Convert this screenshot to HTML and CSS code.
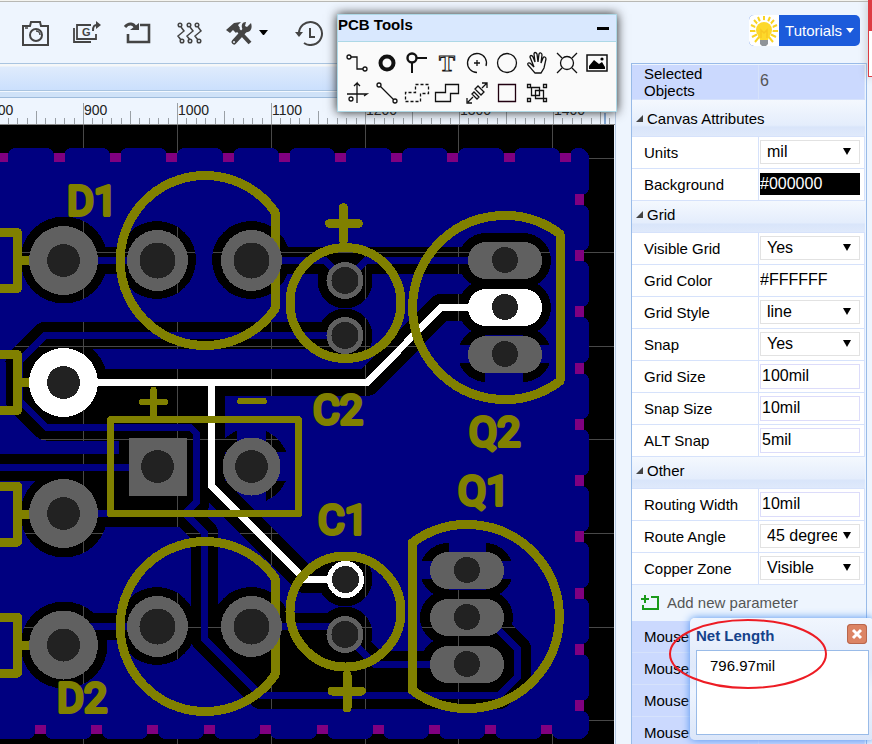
FILE: index.html
```html
<!DOCTYPE html>
<html lang="en">
<head>
<meta charset="utf-8">
<title>PCB Editor</title>
<link rel="stylesheet" href="styles.css">
</head>
<body>
<header class="topbar">
  <nav class="toolbar" aria-label="Main toolbar">
    <button class="tool" aria-label="Snapshot"><svg width="30" height="26" viewBox="0 0 30 26"><path d="M2 6h7l1-4h9l1 4h7v19H2z" fill="none" stroke="#444" stroke-width="2"/><circle cx="15" cy="15" r="6" fill="none" stroke="#444" stroke-width="2"/><path d="M15 11a4 4 0 0 1 4 4M4 8h3" fill="none" stroke="#444" stroke-width="1.5"/></svg></button>
    <button class="tool" aria-label="Generate Gerber"><svg width="30" height="26" viewBox="0 0 30 26"><path d="M19 5H5v14h19v-5M2 8v14h17" fill="none" stroke="#444" stroke-width="1.8"/><path d="M21 11c0-5 1-6 5-6" fill="none" stroke="#444" stroke-width="2"/><path d="M24 1l5 4-5 4z" fill="#444"/><text x="10" y="16" class="gerber">G</text></svg></button>
    <button class="tool" aria-label="Import changes"><svg width="30" height="26" viewBox="0 0 30 26"><path d="M17 5h9v17H5V14" fill="none" stroke="#444" stroke-width="2.6"/><path d="M2 7c4-5 9-3 10 0" fill="none" stroke="#444" stroke-width="3"/><path d="M7 10h9V3z" fill="#444"/></svg></button>
    <button class="tool" aria-label="Autorouter"><svg width="30" height="26" viewBox="0 0 30 26" fill="none" stroke="#444" stroke-width="1.5"><circle cx="6" cy="5" r="1.800"/><circle cx="15" cy="5" r="1.800"/><circle cx="23" cy="5" r="1.800"/><circle cx="8" cy="21" r="1.800"/><circle cx="16" cy="21" r="1.800"/><circle cx="25" cy="21" r="1.800"/><path d="M7 7l3 4-6 5 3 4M16 7l3 4-6 5 3 4M24 7l3 4-6 5 3 4"/></svg></button>
    <button class="tool menu" aria-label="Tools"><svg width="30" height="26" viewBox="0 0 30 26"><path d="M1 10l8-7 7-1-3 3 2 3-4 5-3-3-3 3z" fill="#444"/><path d="M12 9l13 14" stroke="#444" stroke-width="4"/><path d="M9 22l11-12" stroke="#444" stroke-width="5" stroke-linecap="round"/><circle cx="9" cy="22" r="1" fill="#eef5fe"/><path d="M26 3l-4 4-2-1 1-4c-5 0-5 5-3 8l2 2c5 1 8-3 6-9z" fill="#444"/></svg><svg width="9" height="5" viewBox="0 0 9 5"><path d="M0 0h9L5 5H4z"/></svg></button>
    <button class="tool" aria-label="History"><svg width="30" height="26" viewBox="0 0 30 26"><path d="M5 14A11.500 11.500 0 1 1 10 23" fill="none" stroke="#444" stroke-width="2"/><path d="M1 12h8l-4 5z" fill="#444"/><path d="M16 8v9h5" fill="none" stroke="#444" stroke-width="2"/></svg></button>
  </nav>
  <button class="tutorials">
    <span class="bulb"><svg width="30" height="31" viewBox="0 0 30 31"><path d="M15 1v7M15 16L1 16M29 16H15M15 16L5 5M15 16L25 5M15 16L9 2M15 16L21 2M15 16L2 10M15 16L28 10M15 16L3 22M15 16L27 22M15 16L6 27M15 16L24 27" stroke="#f9d423" stroke-width="2"/><circle cx="15" cy="14" r="9" fill="#fff"/><circle cx="15" cy="15" r="8" fill="#fdd92b"/><path d="M9 19h12l-2 6h-8z" fill="#fdd92b"/><path d="M12 23v-8l3 3 3-3v8" fill="none" stroke="#f8c722" stroke-width="1.5"/><path d="M11 25h8v4l-2 2h-4l-2-2z" fill="#8f9499"/></svg></span>
    <span class="tutorials-label">Tutorials<svg width="8" height="5" viewBox="0 0 8 5"><path d="M0 0h8L4 5z" fill="#fff"/></svg></span>
  </button>
</header>

<div class="panes">
  <main class="editor">
    <div class="tabstrip"></div>
    <div class="tabline"></div>
    <div class="ruler">
      <svg width="100%" height="28">
        <defs>
          <pattern id="ticks" x="83" y="0" width="94" height="28" patternUnits="userSpaceOnUse">
            <path d="M0 5h1v23h-1zM47 13h1v15h-1z" fill="#9aa0a6"/>
            <path d="M9 20h1v8h-1zM19 20h1v8h-1zM28 20h1v8h-1zM38 20h1v8h-1zM56 20h1v8h-1zM66 20h1v8h-1zM75 20h1v8h-1zM85 20h1v8h-1z" fill="#9aa0a6"/>
          </pattern>
        </defs>
        <rect width="100%" height="28" fill="url(#ticks)"/>
        <text x="-10" y="17">800</text><text x="84" y="17">900</text><text x="178" y="17">1000</text><text x="272" y="17">1100</text><text x="366" y="17">1200</text><text x="460" y="17">1300</text><text x="554" y="17">1400</text>
        <path d="M605 15v13" stroke="#1d5fae"/>
      </svg>
    </div>
    <div class="canvas">
      <svg class="board" width="614" height="619" viewBox="0 125 614 619" shape-rendering="crispEdges">
        <defs>
          <path id="notch" d="M-12-1V0Q-6 1-5 7V14H5V7Q6 1 12 0V-1z"/>
          <rect id="via-edge" x="-5" y="5" width="11" height="9"/>
          <g id="pad-l"><circle r="34.5"/><circle r="16.5" fill="#222"/></g>
          <g id="pad-m"><circle r="30.5"/><circle r="18" fill="#222"/></g>
          <g id="pad-s"><circle r="18.5"/><circle r="13.5" fill="#222"/></g>
          <g id="pad-o"><rect x="-37" y="-18" width="74" height="37" rx="18"/><circle r="13" fill="#222"/></g>
          <rect id="gap-o" x="-47" y="-27" width="93" height="55" rx="28"/>
          <g id="traces">
            <path d="M64 260.5H157M251 260.5H325L345 281L366 260.5H505"/>
            <path d="M345 335.5H45L19 361.5V400L46 427H190L196 433V503L185 513.5H64M0 467H157"/>
            <path d="M185 513.5L204.5 533V639L261 695.5H499L517.5 677V649L486 617"/>
            <path d="M64 645L83 626.5H157M251 626.5H337L345 634.5L374 664H467"/>
          </g>
          <path id="net" d="M64 382.5H367L441 307.5H505M211 382V485.5L305 579.5H345"/>
          <mask id="clearance" maskUnits="userSpaceOnUse" x="0" y="125" width="614" height="619">
            <rect x="-20" y="148" width="609" height="591" rx="10" fill="#fff"/>
            <g fill="#000">
              <circle cx="251" cy="466" r="38"/><use href="#gap-o" x="505" y="354"/><use href="#gap-o" x="467" y="570"/>
            </g>
            <path d="M237 425h29v85h-29zM210 452h85v29h-85zM485 323h38v62h-38zM455 345h100v18H455zM449 540h37v60h-37zM417 561h100v18H417z" fill="#fff"/>
            <g fill="#000">
              <circle cx="64" cy="260" r="43.5"/><circle cx="64" cy="382" r="43.5"/><circle cx="64" cy="514" r="43.5"/><circle cx="64" cy="645" r="43.5"/>
              <circle cx="157" cy="260" r="39"/><circle cx="251" cy="260" r="39"/><circle cx="157" cy="626" r="39"/><circle cx="251" cy="626" r="39"/>
              <circle cx="345" cy="281" r="27.5"/><circle cx="345" cy="336" r="27.5"/><circle cx="345" cy="579" r="27.5"/><circle cx="345" cy="634" r="27.5"/>
              <use href="#gap-o" x="505" y="260"/><use href="#gap-o" x="505" y="307"/><use href="#gap-o" x="467" y="617"/><use href="#gap-o" x="467" y="664"/>
              <path d="M119 428h78v78h-78zM85 390h126v26H85zM90 468h100v40H90zM215 640h155l20 50H262zM370 674h140v14H370z"/>
              <path d="M480 660h34v20h-34zM325 250h40v20h-40z"/>
            </g>
            <g fill="none" stroke="#000" stroke-width="27" stroke-linejoin="round"><use href="#traces"/><use href="#net"/></g>
            <g>
              <use href="#notch" x="3" y="148"/><use href="#notch" x="59" y="148"/><use href="#notch" x="115" y="148"/><use href="#notch" x="172" y="148"/><use href="#notch" x="228" y="148"/><use href="#notch" x="284" y="148"/><use href="#notch" x="340" y="148"/><use href="#notch" x="397" y="148"/><use href="#notch" x="453" y="148"/><use href="#notch" x="509" y="148"/><use href="#notch" x="565" y="148"/>
            </g>
            <g transform="translate(589) rotate(90)">
              <use href="#notch" x="200"/><use href="#notch" x="256"/><use href="#notch" x="312"/><use href="#notch" x="368"/><use href="#notch" x="424"/><use href="#notch" x="481"/><use href="#notch" x="537"/><use href="#notch" x="593"/><use href="#notch" x="649"/><use href="#notch" x="706"/>
            </g>
            <g transform="translate(0 739) scale(1 -1)">
              <use href="#notch" x="40"/><use href="#notch" x="97"/><use href="#notch" x="153"/><use href="#notch" x="209"/><use href="#notch" x="265"/><use href="#notch" x="322"/><use href="#notch" x="378"/><use href="#notch" x="434"/><use href="#notch" x="490"/><use href="#notch" x="547"/>
            </g>
          </mask>
        </defs>
        <rect y="125" width="614" height="619" fill="#000"/>
        <path d="M83.500 125V744M177.500 125V744M271.500 125V744M365 125V744M458.500 125V744M552.500 125V744M0 158.500H614M0 252.500H614M0 346H614M0 439.500H614M0 533.500H614M0 627.500H614M0 720.500H614" stroke="#484848"/>
        <rect y="125" width="614" height="619" fill="#000080" mask="url(#clearance)"/>
        <g fill="#800080">
          <use href="#via-edge" x="2" y="148"/><use href="#via-edge" x="59" y="148"/><use href="#via-edge" x="115" y="148"/><use href="#via-edge" x="171" y="148"/><use href="#via-edge" x="228" y="148"/><use href="#via-edge" x="284" y="148"/><use href="#via-edge" x="340" y="148"/><use href="#via-edge" x="396" y="148"/><use href="#via-edge" x="452" y="148"/><use href="#via-edge" x="509" y="148"/><use href="#via-edge" x="565" y="148"/>
          <g transform="translate(589) rotate(90)">
            <use href="#via-edge" x="199"/><use href="#via-edge" x="255"/><use href="#via-edge" x="311"/><use href="#via-edge" x="368"/><use href="#via-edge" x="424"/><use href="#via-edge" x="480"/><use href="#via-edge" x="536"/><use href="#via-edge" x="593"/><use href="#via-edge" x="649"/><use href="#via-edge" x="705"/>
          </g>
          <g transform="translate(0 739) scale(1 -1)">
            <use href="#via-edge" x="40"/><use href="#via-edge" x="96"/><use href="#via-edge" x="152"/><use href="#via-edge" x="209"/><use href="#via-edge" x="265"/><use href="#via-edge" x="322"/><use href="#via-edge" x="378"/><use href="#via-edge" x="434"/><use href="#via-edge" x="490"/><use href="#via-edge" x="546"/>
          </g>
        </g>
        <g fill="none" stroke-width="7"><use href="#traces" stroke="#000080"/><use href="#net" stroke="#fff"/></g>
        <g fill="none" stroke="#808000" stroke-width="9" stroke-linejoin="round">
          <path d="M275 212A85 85 0 1 0 275 309z"/>
          <path d="M275 578A85 85 0 1 0 275 675z"/>
          <circle cx="345.500" cy="303" r="55.500"/><circle cx="345.500" cy="611.500" r="55.500"/>
          <path d="M560 234A92 92 0 1 0 560 381z"/>
          <path d="M412 543A92 92 0 1 1 412 690z"/>
          <path d="M-5 232.500H17.500V288.500H-5M22 260.500H32M-5 354.500H17.500V410.500H-5M22 382.500H32M-5 486H17.500V542H-5M22 514H32M-5 617H17.500V673H-5M22 645H32"/>
          <path d="M110.500 419.500H298.500V513.500H110.500z" stroke-width="7"/>
          <g stroke-linecap="round"><path d="M329.500 223.500H358.500M343.500 207.500V240M332 691H361.500M347 675V708"/><path d="M142 402H165M153.500 390V416M240.500 401H263.500" stroke-width="6.500"/></g>
        </g>
        <g class="refdes">
          <text x="67" y="215">D1</text><text x="313" y="424">C2</text><text x="469" y="446">Q2</text><text x="458" y="505">Q1</text><text x="318" y="534">C1</text><text x="57" y="712">D2</text>
        </g>
        <g fill="#606060">
          <use href="#pad-l" x="63.500" y="260.500"/><use href="#pad-l" x="63.500" y="382.500" fill="#fff"/><use href="#pad-l" x="63.500" y="513.500"/><use href="#pad-l" x="63.500" y="645"/>
          <use href="#pad-m" x="157.500" y="260.500"/><use href="#pad-m" x="251.500" y="260.500"/><use href="#pad-m" x="157.500" y="626.500"/><use href="#pad-m" x="251.500" y="626.500"/>
          <rect x="129" y="438" width="58" height="58"/><circle cx="157.500" cy="466.500" r="16.500" fill="#222"/>
          <circle cx="251.500" cy="466.500" r="29"/><circle cx="251.500" cy="466.500" r="16.500" fill="#222"/>
          <use href="#pad-s" x="345" y="280.500"/><use href="#pad-s" x="345" y="335.500"/><use href="#pad-s" x="345.500" y="579.500" fill="#fff"/><use href="#pad-s" x="345" y="634.500"/>
          <use href="#pad-o" x="505" y="260"/><use href="#pad-o" x="505" y="307" fill="#fff"/><use href="#pad-o" x="505" y="354"/>
          <use href="#pad-o" x="467" y="570"/><use href="#pad-o" x="467" y="617"/><use href="#pad-o" x="467" y="664"/>
        </g>
      </svg>
    </div>
  </main>

  <aside class="sidebar">
    <form class="props">
      <div class="row readonly selected"><span class="name">Selected Objects</span><output class="value">6</output></div>
      <h2 class="group first">Canvas Attributes</h2>
      <div class="row"><label class="name" for="units">Units</label><div class="value"><select id="units"><option>mil</option></select></div></div>
      <div class="row"><label class="name" for="bg">Background</label><div class="value"><input id="bg" class="swatch dark" value="#000000"></div></div>
      <h2 class="group">Grid</h2>
      <div class="row"><label class="name" for="vgrid">Visible Grid</label><div class="value"><select id="vgrid"><option>Yes</option></select></div></div>
      <div class="row"><label class="name" for="gcolor">Grid Color</label><div class="value"><input id="gcolor" class="swatch" value="#FFFFFF"></div></div>
      <div class="row"><label class="name" for="gstyle">Grid Style</label><div class="value"><select id="gstyle"><option>line</option></select></div></div>
      <div class="row"><label class="name" for="snap">Snap</label><div class="value"><select id="snap"><option>Yes</option></select></div></div>
      <div class="row"><label class="name" for="gsize">Grid Size</label><div class="value"><input id="gsize" value="100mil"></div></div>
      <div class="row"><label class="name" for="ssize">Snap Size</label><div class="value"><input id="ssize" value="10mil"></div></div>
      <div class="row"><label class="name" for="alt">ALT Snap</label><div class="value"><input id="alt" value="5mil"></div></div>
      <h2 class="group">Other</h2>
      <div class="row"><label class="name" for="rwidth">Routing Width</label><div class="value"><input id="rwidth" value="10mil"></div></div>
      <div class="row"><label class="name" for="angle">Route Angle</label><div class="value"><select id="angle"><option>45 degree</option></select></div></div>
      <div class="row"><label class="name" for="zone">Copper Zone</label><div class="value"><select id="zone"><option>Visible</option></select></div></div>
      <button type="button" class="add"><svg width="18" height="16" viewBox="0 0 18 16"><path d="M10 2h7v12H2v-4M0 4h8M4 0v8" fill="none" stroke="#1a9a1a" stroke-width="2"/></svg>Add new parameter</button>
      <div class="row readonly"><span class="name">Mouse</span><output class="value"></output></div>
      <div class="row readonly"><span class="name">Mouse</span><output class="value"></output></div>
      <div class="row readonly"><span class="name">Mouse</span><output class="value"></output></div>
      <div class="row readonly"><span class="name">Mouse</span><output class="value"></output></div>
    </form>
  </aside>
</div>

<section class="palette" aria-label="PCB Tools">
  <div class="palette-head"><h2>PCB Tools</h2><button class="minimize" aria-label="Minimize"></button></div>
  <div class="palette-body">
    <button aria-label="Track"><svg viewBox="0 0 30 30"><circle cx="7" cy="9" r="2"/><circle cx="23" cy="21" r="2"/><path d="M9 9h6v12h6"/></svg></button>
    <button aria-label="Pad"><svg viewBox="0 0 30 30"><circle cx="15" cy="15" r="6.500" stroke-width="4"/></svg></button>
    <button aria-label="Via"><svg viewBox="0 0 30 30"><circle cx="10" cy="10" r="4.500" stroke-width="2.400"/><path d="M15 10h10M10 15v10" stroke-width="2"/></svg></button>
    <button aria-label="Text"><svg viewBox="0 0 30 30"><text x="7" y="23" class="text-tool">T</text></svg></button>
    <button aria-label="Arc"><svg viewBox="0 0 30 30"><path d="M24 18A9.500 9.500 0 1 0 15 24.500M15 12v6M12 15h6"/></svg></button>
    <button aria-label="Circle"><svg viewBox="0 0 30 30"><circle cx="15" cy="15" r="9.500"/></svg></button>
    <button aria-label="Move"><svg viewBox="0 0 30 30"><path d="M13 25c-3-3-5-6-7-8-1-2 1-3 3-1l3 3L8 9c0-2 2-2 3 0l2 5-1-8c0-2 2-2 3 0l1 8 1-8c1-2 3-1 3 1l-1 8 2-5c1-2 3-1 3 1l-2 9-3 5z"/></svg></button>
    <button aria-label="Hole"><svg viewBox="0 0 30 30"><circle cx="15" cy="15" r="6.500"/><path d="M5 5l5 5M25 5l-5 5M5 25l5-5M25 25l-5-5"/></svg></button>
    <button aria-label="Image"><svg viewBox="0 0 30 30"><rect x="5" y="7" width="20" height="16" stroke-width="1.500"/><path d="M7 21v-3l5-6 5 4 3-2 3 5v2z" fill="#000" stroke="none"/><circle cx="20" cy="11" r="1.600" fill="#000" stroke="none"/></svg></button>
    <button aria-label="Canvas origin"><svg viewBox="0 0 30 30"><path d="M5 16h20l-3 2M15 25V5l-3 3M15 5l3 3"/><circle cx="9" cy="21" r="2"/></svg></button>
    <button aria-label="Line"><svg viewBox="0 0 30 30"><circle cx="7" cy="7" r="2"/><circle cx="23" cy="23" r="2"/><path d="M8.500 8.500l13 13"/></svg></button>
    <button aria-label="Copper area"><svg viewBox="0 0 30 30"><path d="M13.500 6.500h13v9h-8v8h-15v-9h10z" stroke-dasharray="3 2"/></svg></button>
    <button aria-label="Solid region"><svg viewBox="0 0 30 30"><path d="M13.500 6.500h13v9h-8v8h-15v-9h10z"/></svg></button>
    <button aria-label="Dimension"><svg viewBox="0 0 30 30"><path d="M6 24l5-5M20 10l5-5M5 20v5h5M20 5h5v5"/><path d="M10 16l2-2 5 5-2 2zM13 11l3-3 6 6-3 3z"/></svg></button>
    <button aria-label="Rectangle"><svg viewBox="0 0 30 30"><path d="M6.500 6.500h17v17h-17z" stroke="#200010"/></svg></button>
    <button aria-label="Group"><svg viewBox="0 0 30 30"><path d="M5.500 6.500h3v3h-3zM21.500 6.500h3v3h-3zM5.500 20.500h3v3h-3zM21.500 20.500h3v3h-3zM9.500 9.500h8v8h-8zM13.500 12.500h8v8h-8z"/></svg></button>
  </div>
</section>

<div class="notice"></div>

<section class="dialog" aria-label="Net Length">
  <div class="dialog-head"><h2>Net Length</h2><button class="close" aria-label="Close"><svg width="20" height="20" viewBox="0 0 20 20"><path d="M6 6l8 8M14 6l-8 8" stroke="#fff" stroke-width="3"/></svg></button></div>
  <div class="dialog-body">796.97mil</div>
</section>
<svg class="callout" width="160" height="72" viewBox="0 0 160 72"><ellipse cx="80" cy="36" rx="78" ry="34" fill="none" stroke="#ed1c24" stroke-width="2"/></svg>
</body>
</html>
```
FILE: styles.css
```css
* { box-sizing: border-box; }
body {
  margin: 0;
  height: 100vh;
  display: flex;
  flex-direction: column;
  overflow: hidden;
  position: relative;
  background: #eef5fe;
  color: #000;
  font: 15px/17px "Liberation Sans", Arial, sans-serif;
}
button { border: 0; padding: 0; margin: 0; background: none; font: inherit; color: inherit; }
h2 { margin: 0; font-size: 15px; line-height: 17px; }
svg { display: block; }

.topbar {
  height: 64px;
  flex: none;
  display: flex;
  justify-content: space-between;
  align-items: center;
  padding: 2px 12px 6px 21px;
  border-top: 1px solid #f4f4f0;
  box-shadow: inset 0 1px #b8b8b4;
}
.toolbar { display: flex; gap: 21px; padding-top: 4px; }
.tool.menu { display: flex; align-items: center; gap: 4px; margin-right: 5px; }
.gerber { font: bold 11px "Liberation Sans", sans-serif; fill: #444; }

.tutorials { display: flex; height: 31px; border-radius: 5px; overflow: hidden; background: #1c5bdb; color: #fff; }
.bulb { width: 30px; background: #fff; }
.tutorials-label { display: flex; align-items: center; gap: 4px; padding: 0 6px; }

.panes { flex: 1; display: flex; min-height: 0; }
.editor { flex: 1; min-width: 0; display: flex; flex-direction: column; border-right: 1px solid #b6cbe6; margin-top: -1px; }
.tabstrip { height: 28px; flex: none; border: solid #a9c4e0; border-width: 1px 0; background: linear-gradient(#f5f7f8 0, #f5f7f8 2px, #dfebfc 3px, #cbe0fd); }
.tabline { height: 7px; flex: none; border-bottom: 1px solid #9dbbdc; border-top: 1px solid #f2f8ff; background: #cfe2f8; }
.ruler { height: 27px; flex: none; overflow: hidden; border-bottom: 1px solid #888; }
.ruler text { font: 14px "Liberation Sans", Arial, sans-serif; fill: #222; }
.canvas { flex: 1; min-height: 0; overflow: hidden; background: #000; margin-right: 1px; }
.refdes text {
  font: 41px Roboto, "Liberation Sans", sans-serif;
  fill: #808000;
  stroke: #808000;
  stroke-width: 4px;
  stroke-linejoin: round;
}

.sidebar { flex: none; width: 256px; padding: 0 5px 0 15px; margin-top: -1px; }
.props { border: solid #99bbe8; border-width: 1px 1px 0; padding: 1px 1px 0 0; }
.row { display: flex; height: 32px; background: #fff; border-bottom: 1px solid #d6e2fb; border-right: 1px solid #d6e2fb; }
.name { flex: 1; padding: 7px 12px 0; border-right: 1px solid #d6e2fb; }
.value { width: 105px; padding: 3px 4px 0 1px; }
.readonly { background: #cbd9fe; }
.readonly .name { padding-right: 30px; }
.selected { height: 35px; }
.selected .name { padding-top: 0; }
.selected .value { padding-top: 7px; font-size: 16px; color: #555; }
.group {
  display: flex;
  align-items: center;
  gap: 4px;
  height: 32px;
  padding: 0 0 4px 4px;
  font-weight: normal;
  border-bottom: 1px solid #d6e2fb;
  background: linear-gradient(#f4f8fe, #e4edfc 70%, #d9e5fa 75%, #dfe9fb);
}
.group::before { content: ""; border: solid; border-width: 0 0 7px 7px; border-color: transparent transparent #444; }
.group.first { height: 37px; padding-top: 5px; }

input, select {
  display: block;
  width: 100%;
  height: 25px;
  margin: 0;
  border: 1px solid #dcdcfa;
  border-radius: 0;
  outline: 0;
  background: #fff;
  color: #000;
  padding: 0 1px 2px;
  font: 16px/18px "Liberation Sans", Arial, sans-serif;
}
select {
  appearance: none;
  height: 24px;
  border-color: #e2e2e2;
  padding: 0 22px 0 6px;
}
.value:has(select) { position: relative; }
.value:has(select)::after {
  content: "";
  position: absolute;
  right: 13px;
  top: 11px;
  border: solid transparent;
  border-width: 7px 4px 0;
  border-top-color: #000;
  pointer-events: none;
}
.swatch { height: 22px; border: 0; padding: 0 0 1px; margin-top: 1px; }
.swatch.dark { background: #000; color: #fff; }

.add { display: flex; align-items: center; gap: 8px; width: 100%; height: 36px; padding: 0 0 1px 9px; color: #555; }

.palette {
  position: absolute;
  left: 337px;
  top: 14px;
  width: 280px;
  border: 1px solid #add8e6;
  background: #fafafa;
  box-shadow: 0 0 10px #222;
}
.palette-head { display: flex; justify-content: space-between; height: 27px; padding: 1px 7px 0 0; background: #d9e8fe; border-bottom: 1px solid #add8e6; }
.minimize { width: 12px; height: 3px; margin-top: 11px; background: #000; }
.palette-body { display: grid; grid-template-columns: repeat(9, 30px); padding: 6px 4px 3px; }
.palette-body svg { width: 30px; height: 30px; fill: none; stroke: #111; stroke-width: 1.3px; }
.palette-body .text-tool { font: bold 24px "Liberation Serif", serif; fill: #fafafa; stroke-width: 1px; }

.notice { position: absolute; right: 0; top: 0; width: 4px; height: 77px; border: solid #dd3c42; border-width: 31px 0 1px 1px; background: #fff; box-shadow: 0 0 8px #aaa; }

.dialog {
  position: absolute;
  left: 690px;
  top: 618px;
  width: 184px;
  height: 122px;
  padding: 5px 5px 5px 6px;
  display: flex;
  flex-direction: column;
  border-radius: 5px;
  background: linear-gradient(#f1f6fe, #dfe9fa 40%, #eef4fe 60%, #dbe6f9);
  box-shadow: 0 0 8px #4a90f0;
}
.dialog-head { display: flex; justify-content: space-between; height: 27px; padding-right: 2px; color: #15428b; }
.dialog-head h2 { padding-top: 4px; }
.close { width: 20px; height: 20px; margin-top: 1px; border-radius: 4px; background: #dc8464; box-shadow: inset 0 0 0 1px #b8664c; }
.dialog-body { flex: 1; background: #fff; border: 1px solid #99bbe8; padding: 6px 13px; }
.callout { position: absolute; left: 668px; top: 618px; pointer-events: none; }
```
